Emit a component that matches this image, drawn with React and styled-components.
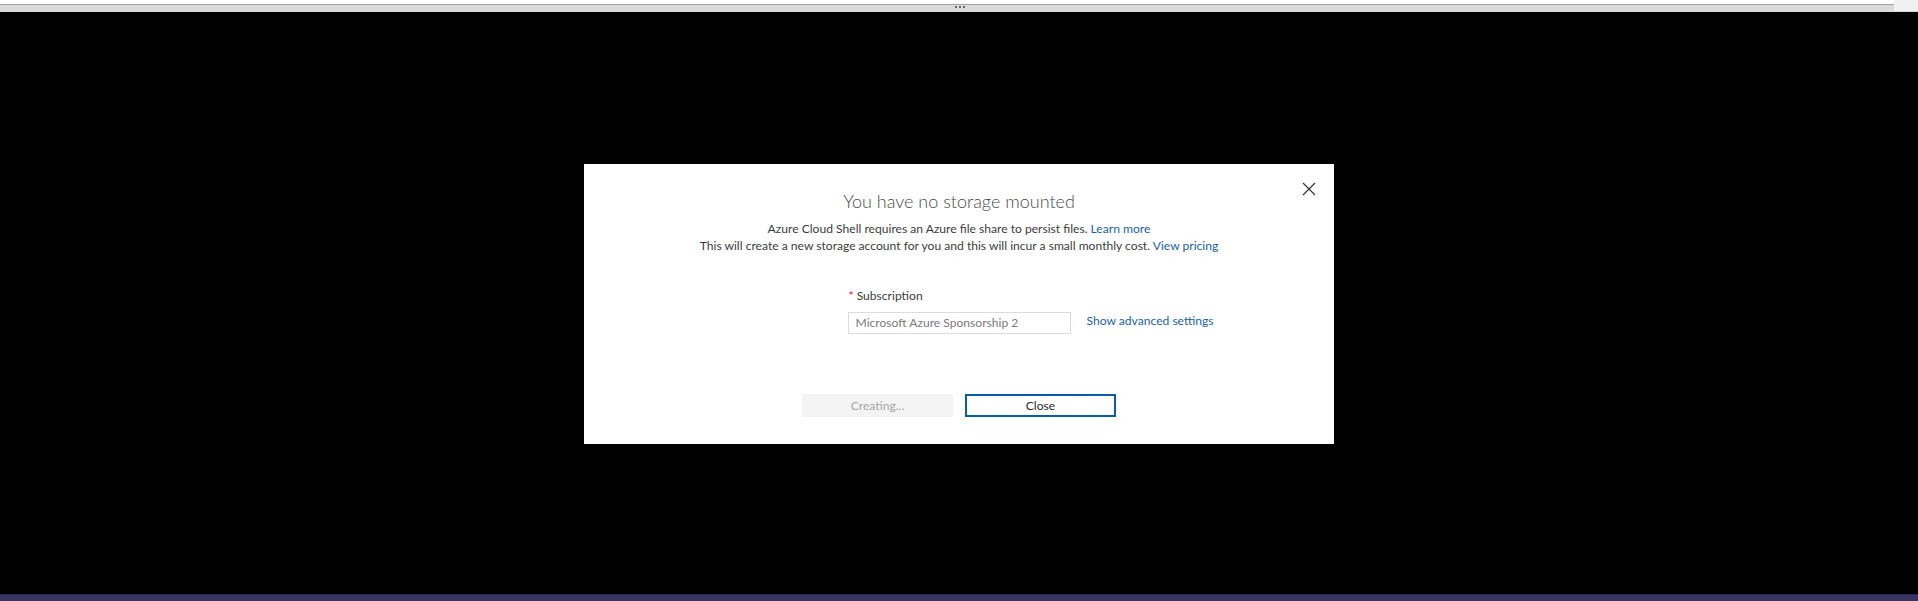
import React from "react";
import styled, { createGlobalStyle } from "styled-components";

const Global = createGlobalStyle`
  html, body { margin: 0; padding: 0; background: #000; }
  body { font-family: Lato, "Liberation Sans", sans-serif; }
  #root { height: 601px; }
`;

const Page = styled.div`
  height: 601px;
  display: flex;
  flex-direction: column;
  background: #000;
`;

const TopStrip = styled.div`
  height: 4px;
  background: #ffffff;
`;

const Handle = styled.div`
  height: 6px;
  border-top: 1px solid #a3a3a3;
  background: #dadada;
  display: flex;
  justify-content: center;
  align-items: flex-start;
  gap: 2px;
  padding-top: 1px;
  padding-left: 2px;
  position: relative;
`;

const Dot = styled.span`
  width: 2px;
  height: 2px;
  background: #6a6a6a;
`;

const Corner = styled.div`
  position: absolute;
  right: 0;
  top: -5px;
  width: 24px;
  height: 11px;
  background: #f1f1f1;
`;

const Stage = styled.div`
  flex: 1;
  display: flex;
  align-items: center;
  justify-content: center;
  padding-top: 2px;
`;

const Dialog = styled.div`
  position: relative;
  width: 750px;
  height: 280px;
  box-sizing: border-box;
  background: #fff;
  padding-top: 25px;
  display: flex;
  flex-direction: column;
  align-items: center;
`;

const CloseX = styled.button`
  position: absolute;
  top: 18px;
  right: 18px;
  width: 14px;
  height: 14px;
  padding: 0;
  border: 0;
  background: transparent;
  display: flex;
`;

const Title = styled.h2`
  margin: 0;
  font-size: 18px;
  line-height: 24px;
  font-weight: 300;
  color: #4a4a4a;
`;

const Desc = styled.p`
  margin: 7px 0 0;
  font-size: 12.1px;
  line-height: 17px;
  color: #3c3c3c;
  text-align: center;
`;

const Link = styled.a`
  color: #1b5fa8;
  text-decoration: none;
`;

const Form = styled.div`
  margin-top: 33px;
  width: 100%;
  display: grid;
  grid-template-columns: 1fr 223px 1fr;
  column-gap: 16px;
  row-gap: 8px;
`;

const Label = styled.div`
  grid-column: 2;
  font-size: 12.1px;
  line-height: 17px;
  color: #3c3c3c;
  padding-left: 1px;
`;

const Req = styled.span`
  color: #e0101e;
  margin-right: 3px;
`;

const Input = styled.div`
  grid-column: 2;
  height: 22px;
  box-sizing: border-box;
  border: 1px solid #dcdcdc;
  font-size: 12.1px;
  line-height: 20px;
  color: #7a7a7a;
  padding: 0 7px;
  white-space: nowrap;
`;

const Advanced = styled(Link)`
  grid-column: 3;
  font-size: 12.1px;
  line-height: 17px;
  align-self: center;
  margin-top: -5px;
  white-space: nowrap;
`;

const Buttons = styled.div`
  margin-top: 60px;
  display: flex;
  gap: 12px;
`;

const Button = styled.button`
  width: 151px;
  height: 23px;
  box-sizing: border-box;
  font-family: inherit;
  font-size: 12.1px;
  padding: 0;
  background: ${(p) => (p.$primary ? "#fff" : "#f4f4f4")};
  color: ${(p) => (p.$primary ? "#2a2a2a" : "#a6a6a6")};
  border: ${(p) => (p.$primary ? "2px solid #0d5aa7" : "0")};
`;

const BottomBar = styled.div`
  height: 6px;
  border-top: 1px solid #2b2752;
  background: #393463;
`;

export default function App() {
  return (
    <Page>
      <Global />
      <TopStrip />
      <Handle>
        <Dot />
        <Dot />
        <Dot />
        <Corner />
      </Handle>
      <Stage>
        <Dialog>
          <CloseX aria-label="Close">
            <svg width="14" height="14" viewBox="0 0 14 14">
              <path d="M1 1 L13 13 M13 1 L1 13" stroke="#333" strokeWidth="1.2" fill="none" />
            </svg>
          </CloseX>
          <Title>You have no storage mounted</Title>
          <Desc>
            Azure Cloud Shell requires an Azure file share to persist files. <Link href="#">Learn more</Link>
            <br />
            This will create a new storage account for you and this will incur a small monthly cost.{" "}
            <Link href="#">View pricing</Link>
          </Desc>
          <Form>
            <Label>
              <Req>*</Req>Subscription
            </Label>
            <Input>Microsoft Azure Sponsorship 2</Input>
            <Advanced href="#">Show advanced settings</Advanced>
          </Form>
          <Buttons>
            <Button disabled>Creating...</Button>
            <Button $primary>Close</Button>
          </Buttons>
        </Dialog>
      </Stage>
      <BottomBar />
    </Page>
  );
}
